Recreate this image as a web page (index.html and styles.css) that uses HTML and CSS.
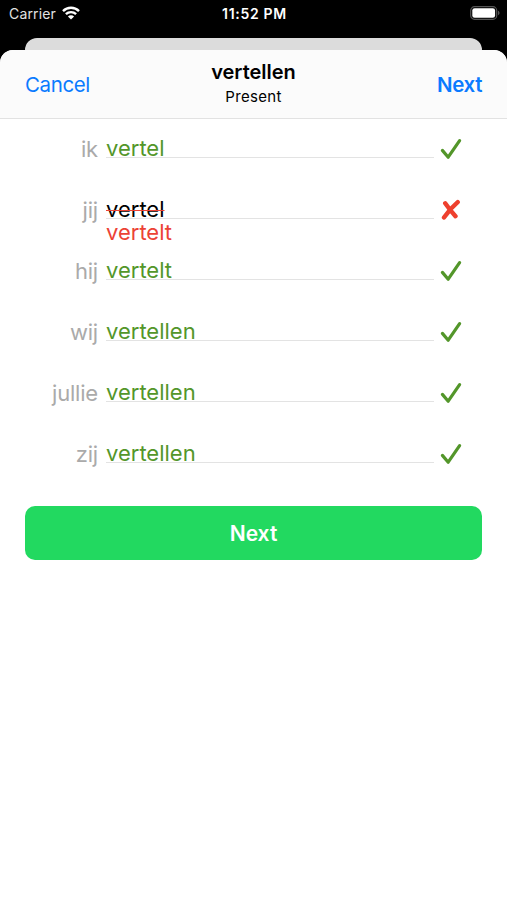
FILE: index.html
```html
<!DOCTYPE html>
<html lang="en">
<head>
    <meta charset="UTF-8">
    <meta name="viewport" content="width=device-width, initial-scale=1.0">
    <title>vertellen</title>
    <link rel="stylesheet" href="styles.css">
</head>
<body>

    <!-- Status Bar -->
    <div class="status-bar">
        <div class="carrier">
            <span>Carrier</span>
            <svg width="18" height="14" viewBox="0 0 18 14" fill="none" stroke="#fff" stroke-width="2.4">
                <path d="M1 5.1a11.4 11.4 0 0 1 16 0"/>
                <path d="M3.9 8.2a7.3 7.3 0 0 1 10.2 0"/>
                <path d="M9 13.6L5.9 10.5a4.4 4.4 0 0 1 6.2 0z" fill="#fff" stroke="none"/>
            </svg>
        </div>
        <div class="time">11:52 PM</div>
        <div class="battery">
            <svg width="30" height="14" viewBox="0 0 30 14">
                <rect x="0.7" y="0.7" width="26" height="12.6" rx="3.8" fill="none" stroke="#555" stroke-width="1.2"/>
                <rect x="2.3" y="2.3" width="22.8" height="9.4" rx="2.3" fill="#fff"/>
                <path d="M28 4.8v4.4c1-.4 1.5-1.2 1.5-2.2S29 5.2 28 4.8z" fill="#555"/>
            </svg>
        </div>
    </div>

    <!-- Card behind the sheet -->
    <div class="back-card"></div>

    <div class="sheet">
        <!-- Navigation Bar -->
        <div class="header">
            <a class="cancel" href="#">Cancel</a>
            <div class="title">
                <h1>vertellen</h1>
                <p>Present</p>
            </div>
            <a class="next" href="#">Next</a>
        </div>

        <!-- Answers -->
        <div class="answers">
            <div class="row">
                <span class="pronoun">ik</span>
                <div class="field"><span class="answer correct">vertel</span></div>
                <svg class="mark" viewBox="0 0 22 22"><path class="check" d="M2.4 12.4L8.2 19.2L19.6 2.6"/></svg>
            </div>
            <div class="row">
                <span class="pronoun">jij</span>
                <div class="field">
                    <span class="answer wrong">vertel</span>
                    <span class="correction">vertelt</span>
                </div>
                <svg class="mark" viewBox="0 0 22 22"><path class="cross" d="M5.2 4.2Q10 11 15.5 17.2M17.7 3.100Q10.500 9.200 4 18.400"/></svg>
            </div>
            <div class="row">
                <span class="pronoun">hij</span>
                <div class="field"><span class="answer correct">vertelt</span></div>
                <svg class="mark" viewBox="0 0 22 22"><path class="check" d="M2.4 12.4L8.2 19.2L19.6 2.6"/></svg>
            </div>
            <div class="row">
                <span class="pronoun">wij</span>
                <div class="field"><span class="answer correct">vertellen</span></div>
                <svg class="mark" viewBox="0 0 22 22"><path class="check" d="M2.4 12.4L8.2 19.2L19.6 2.6"/></svg>
            </div>
            <div class="row">
                <span class="pronoun">jullie</span>
                <div class="field"><span class="answer correct">vertellen</span></div>
                <svg class="mark" viewBox="0 0 22 22"><path class="check" d="M2.4 12.4L8.2 19.2L19.6 2.6"/></svg>
            </div>
            <div class="row">
                <span class="pronoun">zij</span>
                <div class="field"><span class="answer correct">vertellen</span></div>
                <svg class="mark" viewBox="0 0 22 22"><path class="check" d="M2.4 12.4L8.2 19.2L19.6 2.6"/></svg>
            </div>
        </div>

        <button class="next-button">Next</button>
    </div>

</body>
</html>
```
FILE: styles.css
```css
/* General Styles */
* {
    box-sizing: border-box;
}

body {
    margin: 0;
    height: 900px;
    display: flex;
    flex-direction: column;
    background-color: #000;
    font-family: Inter, 'Liberation Sans', sans-serif;
    overflow: hidden;
}

/* Status Bar */
.status-bar {
    display: grid;
    grid-template-columns: 1fr auto 1fr;
    align-items: center;
    height: 26px;
    padding: 0 7px 0 9px;
    margin-bottom: 12px;
    color: #e2e2e2;
    font-size: 14px;
}

.carrier {
    display: flex;
    align-items: center;
    gap: 6px;
    letter-spacing: 0.15px;
}

.time {
    color: #fff;
    font-size: 14px;
    font-weight: 600;
    letter-spacing: 0.7px;
}

.battery {
    display: flex;
    justify-content: flex-end;
}

/* Sheet */
.back-card {
    height: 12px;
    margin: 0 25px;
    background-color: #dcdcdc;
    border-radius: 12px 12px 0 0;
}

.sheet {
    flex: 1;
    background-color: #fff;
    border-radius: 13px 13px 0 0;
    overflow: hidden;
}

.header {
    display: grid;
    grid-template-columns: 1fr auto 1fr;
    align-items: center;
    height: 69px;
    padding: 0 25px;
    background-color: #fbfbfb;
    border-bottom: 1px solid #e2e2e2;
}

.header a {
    color: #0a7aff;
    font-size: 20.5px;
    letter-spacing: -0.4px;
    text-decoration: none;
}

.header .next {
    text-align: right;
    font-weight: 600;
}

.title {
    text-align: center;
}

.title h1 {
    margin: 0;
    font-size: 20px;
    font-weight: 600;
    line-height: 25px;
}

.title p {
    margin: 0;
    font-size: 15px;
    letter-spacing: 0.3px;
    line-height: 23px;
}

/* Answers */
.answers {
    padding: 18px 45px 0 25px;
}

.row {
    display: grid;
    grid-template-columns: 73px 328px 22px;
    column-gap: 8px;
    height: 61px;
    font-size: 22px;
    line-height: 24px;
}

.pronoun {
    color: #aaa;
    text-align: right;
    letter-spacing: -0.2px;
}

.answer {
    display: block;
    height: 21px;
    line-height: 22px;
    border-bottom: 1px solid #e3e3e3;
}

.correct {
    color: #53962a;
}

.wrong {
    color: #000;
    text-decoration: line-through #ec4235 1px;
}

.correction {
    display: block;
    margin-top: 2px;
    color: #ec4235;
    line-height: 22px;
}

.mark {
    width: 22px;
    height: 22px;
    margin: 1px 0 0 -2px;
}

.check,
.cross {
    fill: none;
    stroke-linecap: round;
    stroke-linejoin: round;
}

.check {
    stroke: #53962a;
    stroke-width: 3.2;
}

.cross {
    stroke: #ee402e;
    stroke-width: 4.4;
}

/* Bottom Button */
.next-button {
    display: block;
    width: 457px;
    height: 54px;
    margin: 3px 25px 0;
    border: none;
    border-radius: 10px;
    background-color: #22d960;
    color: #fff;
    font-family: inherit;
    font-size: 21px;
    font-weight: 600;
}
```
